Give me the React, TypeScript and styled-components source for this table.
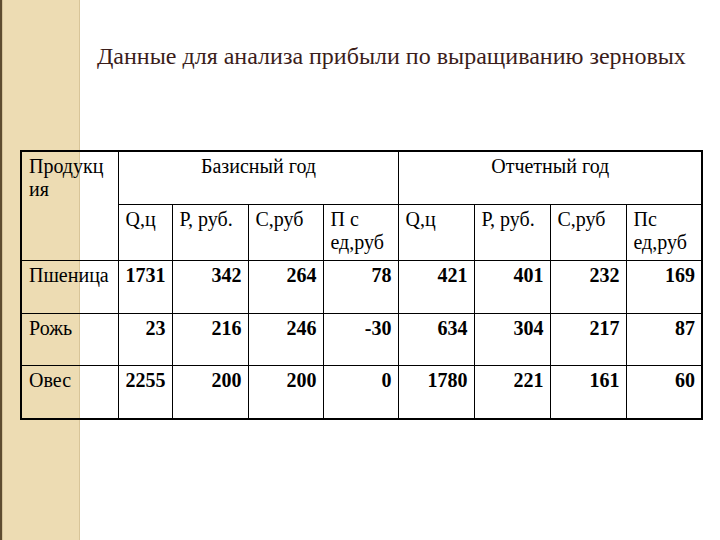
import React from 'react'
import styled, { createGlobalStyle } from 'styled-components'

const serif = `'Liberation Serif', 'Times New Roman', Tinos, 'DejaVu Serif', 'Noto Serif', serif`

const GlobalStyle = createGlobalStyle`
  html, body {
    margin: 0;
    padding: 0;
    background: #fff;
  }
  body {
    font-family: ${serif};
    color: #000;
  }
`

const Slide = styled.div`
  width: 720px;
  height: 540px;
  overflow: hidden;
  box-sizing: border-box;
  padding-top: 42px;
  font-family: ${serif};
  background: linear-gradient(to right, #5e4c30 0, #5e4c30 2px, #d6c49a 2px, #d6c49a 3px, #eddcb3 3px, #eddcb3 79px, #d8c599 79px, #d8c599 80px, #ffffff 80px);
`

const Title = styled.h1`
  margin: 0 0 0 97px;
  font-family: ${serif};
  font-weight: 400;
  font-size: 24px;
  line-height: 28px;
  color: #3b1d1a;
  white-space: nowrap;
`

const Table = styled.table`
  margin: 80px 0 0 20px;
  width: 681px;
  border-collapse: collapse;
  table-layout: fixed;
  border: 2px solid #000;
  font-family: ${serif};
  font-size: 20px;
  line-height: 23px;
`

const Cell = styled.td<{ $align?: 'left' | 'right' | 'center'; $bold?: boolean; $h?: number }>`
  border: 1px solid #000;
  padding: 3px 6px 0 7px;
  vertical-align: top;
  text-align: ${(p) => p.$align || 'left'};
  font-family: ${serif};
  font-weight: ${(p) => (p.$bold ? 700 : 400)};
  height: ${(p) => (p.$h ? `${p.$h}px` : 'auto')};
  box-sizing: border-box;
  background: transparent;
`

const Label = styled(Cell)`
  word-break: break-all;
`

const widths = [97, 54, 76, 75, 75, 76, 76, 76, 76]

const rows: { name: string; values: string[] }[] = [
  { name: 'Пшеница', values: ['1731', '342', '264', '78', '421', '401', '232', '169'] },
  { name: 'Рожь', values: ['23', '216', '246', '-30', '634', '304', '217', '87'] },
  { name: 'Овес', values: ['2255', '200', '200', '0', '1780', '221', '161', '60'] },
]

const subHeads = ['Q,ц', 'Р, руб.', 'С,руб', 'П с ед,руб', 'Q,ц', 'Р, руб.', 'С,руб', 'Пс ед,руб']
const rowHeights = [53, 52, 54]

export default function App() {
  return (
    <>
      <GlobalStyle />
      <Slide>
        <Title>Данные для анализа прибыли по выращиванию зерновых</Title>
        <Table>
          <colgroup>
            {widths.map((w, i) => (
              <col key={i} style={{ width: w }} />
            ))}
          </colgroup>
          <tbody>
            <tr>
              <Label rowSpan={2}>Продукция</Label>
              <Cell colSpan={4} $align='center' $h={53}>
                Базисный год
              </Cell>
              <Cell colSpan={4} $align='center'>
                Отчетный год
              </Cell>
            </tr>
            <tr>
              {subHeads.map((h, i) => (
                <Cell key={i} $h={56}>
                  {h}
                </Cell>
              ))}
            </tr>
            {rows.map((r, ri) => (
              <tr key={r.name}>
                <Cell $h={rowHeights[ri]}>{r.name}</Cell>
                {r.values.map((v, i) => (
                  <Cell key={i} $align='right' $bold>
                    {v}
                  </Cell>
                ))}
              </tr>
            ))}
          </tbody>
        </Table>
      </Slide>
    </>
  )
}
